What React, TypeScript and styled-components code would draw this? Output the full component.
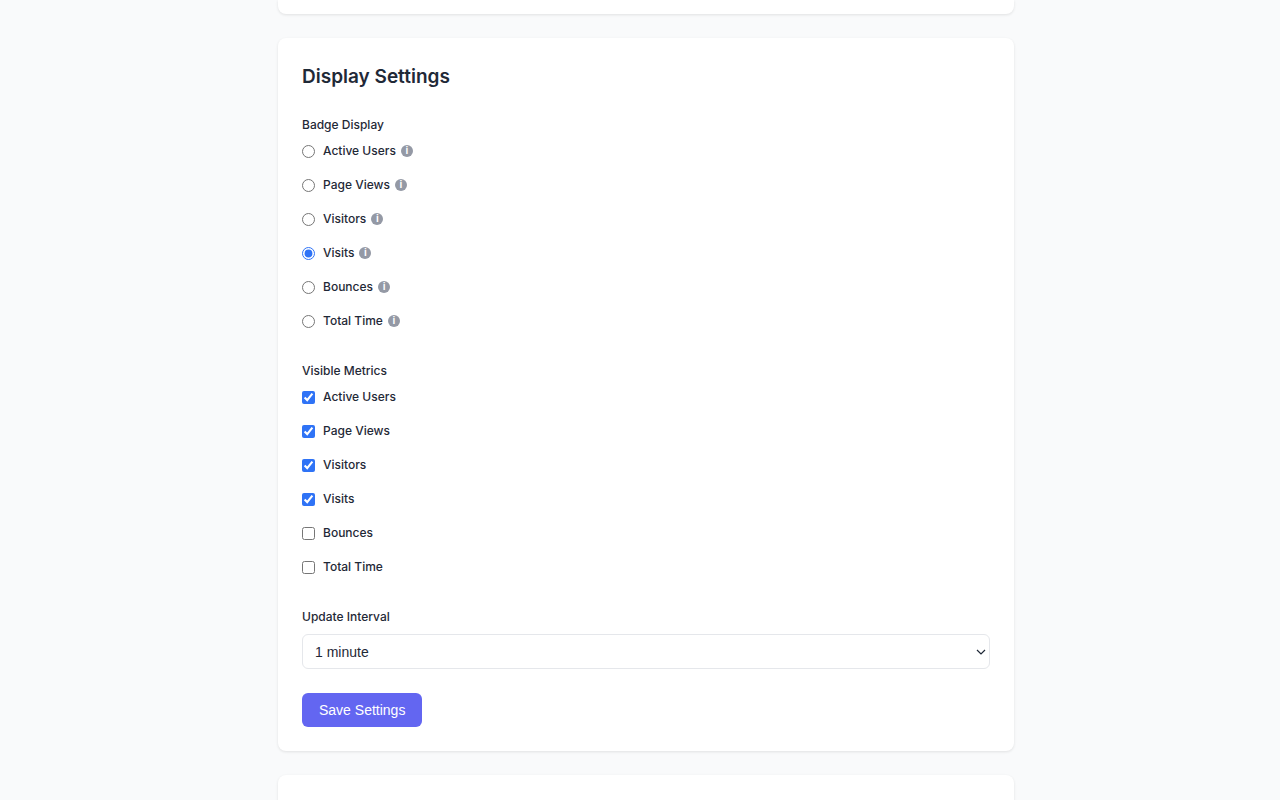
import React, { useState } from "react";
import styled, { createGlobalStyle } from "styled-components";

const GlobalStyle = createGlobalStyle`
  *, *::before, *::after { box-sizing: border-box; }
  body {
    margin: 0;
    background: #f9fafb;
    color: #1f2937;
    font-family: Inter, "Liberation Sans", sans-serif;
    font-size: 12px;
    line-height: 18px;
  }
`;

const Shell = styled.div`
  padding-left: 12px;
  overflow: hidden;
`;

const Column = styled.main`
  display: flex;
  flex-direction: column;
  gap: 24px;
  min-height: 100vh;
  max-width: 736px;
  margin: 0 auto;
`;

const Card = styled.section<{ $edge?: "top" | "bottom" }>`
  padding: ${(p) => (p.$edge === "top" ? "0 24px 14px" : "24px")};
  flex: ${(p) => (p.$edge === "bottom" ? "1 0 24px" : "none")};
  background: #ffffff;
  border-radius: ${(p) =>
    p.$edge === "top" ? "0 0 8px 8px" : p.$edge === "bottom" ? "8px 8px 0 0" : "8px"};
  box-shadow: 0 1px 3px rgba(0, 0, 0, 0.1);
`;

const Form = styled.form`
  display: flex;
  flex-direction: column;
  gap: 32px;
`;

const Title = styled.h2`
  margin: 0 0 24px;
  font-size: 19px;
  font-weight: 600;
  line-height: 30px;
`;

const Group = styled.fieldset`
  margin: 0;
  padding: 0;
  border: 0;
  min-width: 0;
`;

const Legend = styled.legend`
  padding: 0;
  margin-bottom: 8px;
  font-weight: 500;
`;

const Options = styled.div`
  display: flex;
  flex-direction: column;
  gap: 16px;
`;

const Option = styled.label`
  display: flex;
  align-items: center;
  align-self: flex-start;
  gap: 8px;
  font-weight: 500;
  cursor: pointer;
`;

const Choice = styled.input`
  width: 13px;
  height: 13px;
  margin: 0;
  accent-color: #2f73f6;
`;

const OptionText = styled.span`
  display: flex;
  align-items: center;
  gap: 5px;
`;

const Info = styled.span`
  display: flex;
  align-items: center;
  justify-content: center;
  width: 12px;
  height: 12px;
  border-radius: 50%;
  background: #9499a5;
  color: #ffffff;
  font-family: "Liberation Sans", Arial, sans-serif;
  font-size: 10px;
  font-weight: 700;
  line-height: 12px;
`;

const Field = styled.div`
  display: flex;
  flex-direction: column;
  gap: 8px;
`;

const FieldLabel = styled.label`
  font-weight: 500;
`;

const SelectBox = styled.div`
  display: grid;
  align-items: center;
`;

const Select = styled.select`
  grid-area: 1 / 1;
  appearance: none;
  width: 100%;
  height: 35px;
  padding: 0 32px 0 12px;
  border: 1px solid #e5e7eb;
  border-radius: 6px;
  background: #ffffff;
  color: #1f2937;
  font-family: "Liberation Sans", Arial, sans-serif;
  font-size: 14px;
`;

const Chevron = styled.svg`
  grid-area: 1 / 1;
  justify-self: end;
  margin-right: 4px;
  pointer-events: none;
`;

const Actions = styled.div`
  margin-top: 24px;
`;

const SaveButton = styled.button`
  display: block;
  height: 34px;
  padding: 0 17px;
  border: 0;
  border-radius: 6px;
  background: #6366f1;
  color: #ffffff;
  font-family: "Liberation Sans", Arial, sans-serif;
  font-size: 14px;
  cursor: pointer;
`;

const metrics = ["Active Users", "Page Views", "Visitors", "Visits", "Bounces", "Total Time"];
const intervals = ["30 seconds", "1 minute", "5 minutes", "10 minutes"];

export default function App() {
  const [badge, setBadge] = useState("Visits");
  const [visible, setVisible] = useState(metrics.slice(0, 4));
  const [interval, setInterval] = useState("1 minute");

  const toggle = (name: string) =>
    setVisible((list) => (list.includes(name) ? list.filter((m) => m !== name) : [...list, name]));

  return (
    <>
      <GlobalStyle />
      <Shell>
        <Column>
          <Card $edge="top" />
          <Card>
            <Title>Display Settings</Title>
            <Form onSubmit={(e) => e.preventDefault()}>
              <Group>
                <Legend>Badge Display</Legend>
                <Options>
                  {metrics.map((name) => (
                    <Option key={name}>
                      <Choice
                        type="radio"
                        name="badge"
                        checked={badge === name}
                        onChange={() => setBadge(name)}
                      />
                      <OptionText>
                        {name}
                        <Info>i</Info>
                      </OptionText>
                    </Option>
                  ))}
                </Options>
              </Group>
              <Group>
                <Legend>Visible Metrics</Legend>
                <Options>
                  {metrics.map((name) => (
                    <Option key={name}>
                      <Choice
                        type="checkbox"
                        checked={visible.includes(name)}
                        onChange={() => toggle(name)}
                      />
                      <OptionText>{name}</OptionText>
                    </Option>
                  ))}
                </Options>
              </Group>
              <div>
                <Field>
                  <FieldLabel htmlFor="interval">Update Interval</FieldLabel>
                  <SelectBox>
                    <Select
                      id="interval"
                      value={interval}
                      onChange={(e) => setInterval(e.target.value)}
                    >
                      {intervals.map((label) => (
                        <option key={label}>{label}</option>
                      ))}
                    </Select>
                    <Chevron width="10" height="8" viewBox="0 0 10 8" fill="none" aria-hidden="true">
                      <path d="M1 2l4 4 4-4" stroke="#1f2937" strokeWidth="1.2" />
                    </Chevron>
                  </SelectBox>
                </Field>
                <Actions>
                  <SaveButton type="submit">Save Settings</SaveButton>
                </Actions>
              </div>
            </Form>
          </Card>
          <Card $edge="bottom" />
        </Column>
      </Shell>
    </>
  );
}
